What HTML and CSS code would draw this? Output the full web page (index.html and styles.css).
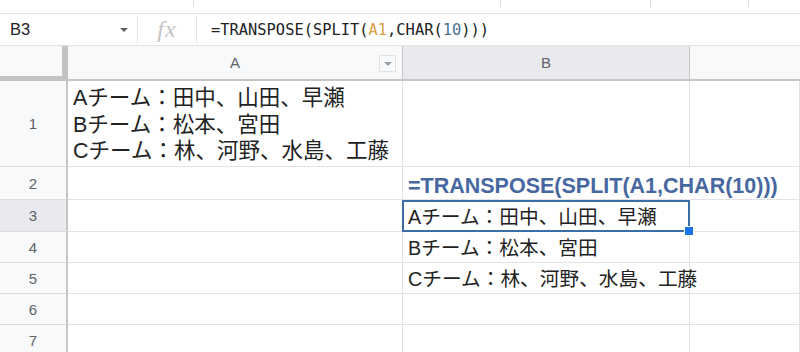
FILE: index.html
```html
<!DOCTYPE html>
<html lang="ja">

<head>
    <meta charset="UTF-8">
    <meta name="viewport" content="width=device-width, initial-scale=1.0">
    <title>TRANSPOSE SPLIT</title>
    <link rel="stylesheet" href="styles.css">
</head>

<body>

    <div class="toolbar-edge">
        <div class="tb tb-1"></div>
        <div class="tb tb-2"></div>
        <div class="tb tb-3"></div>
        <div class="tb tb-4"></div>
    </div>

    <div class="formula-bar">
        <div class="name-box">
            <span>B3</span>
            <span class="caret"></span>
        </div>
        <div class="fx">fx</div>
        <div class="formula">=TRANSPOSE(SPLIT(<span class="ref">A1</span>,CHAR(<span class="num">10</span>)))</div>
    </div>

    <div class="sheet">
        <!-- ヘッダー -->
        <div class="corner"></div>
        <div class="col-head">A<span class="filter-btn"><span class="caret small"></span></span></div>
        <div class="col-head active">B</div>
        <div class="col-head last"></div>

        <!-- 1行目 -->
        <div class="row-head">1</div>
        <div class="cell big">
            <div class="lines">
                <div>Aチーム：田中、山田、早瀬</div>
                <div>Bチーム：松本、宮田</div>
                <div>Cチーム：林、河野、水島、工藤</div>
            </div>
        </div>
        <div class="cell"></div>
        <div class="cell"></div>

        <!-- 2行目 -->
        <div class="row-head">2</div>
        <div class="cell"></div>
        <div class="cell formula-text">=TRANSPOSE(SPLIT(A1,CHAR(10)))</div>
        <div class="cell"></div>

        <!-- 3行目 -->
        <div class="row-head active">3</div>
        <div class="cell"></div>
        <div class="cell selected">Aチーム：田中、山田、早瀬</div>
        <div class="cell"></div>

        <!-- 4行目 -->
        <div class="row-head">4</div>
        <div class="cell"></div>
        <div class="cell">Bチーム：松本、宮田</div>
        <div class="cell"></div>

        <!-- 5行目 -->
        <div class="row-head">5</div>
        <div class="cell"></div>
        <div class="cell">Cチーム：林、河野、水島、工藤</div>
        <div class="cell"></div>

        <!-- 6行目 -->
        <div class="row-head">6</div>
        <div class="cell"></div>
        <div class="cell"></div>
        <div class="cell"></div>

        <!-- 7行目 -->
        <div class="row-head">7</div>
        <div class="cell"></div>
        <div class="cell"></div>
        <div class="cell"></div>
    </div>

</body>

</html>
```

FILE: styles.css
```css
body {
    margin: 0;
    padding: 0;
    width: 800px;
    height: 352px;
    overflow: hidden;
    background-color: #fff;
    color: #222;
    font-family: "Liberation Sans", "Noto Sans CJK JP", sans-serif;
}

.toolbar-edge {
    display: flex;
    border-bottom: 1px solid #e3e3e3;
    box-sizing: border-box;
    height: 14px;
}

.tb {
    height: 7px;
    border-right: 1px solid #dcdcdc;
    box-sizing: border-box;
}

.tb-1 {
    width: 194px;
}

.tb-2 {
    width: 307px;
}

.tb-3 {
    width: 150px;
}

.tb-4 {
    width: 98px;
}

.formula-bar {
    display: flex;
    align-items: stretch;
    height: 32px;
    border-bottom: 1px solid #e3e3e3;
    box-sizing: border-box;
}

.name-box {
    width: 138px;
    box-sizing: border-box;
    padding: 0 9px 0 10px;
    display: flex;
    align-items: center;
    justify-content: space-between;
    border-right: 1px solid #e3e3e3;
    font-size: 16.5px;
    color: #222;
    margin: 2px 0;
}

.caret {
    width: 0;
    height: 0;
    border-left: 4px solid transparent;
    border-right: 4px solid transparent;
    border-top: 4px solid #5f6368;
}

.caret.small {
    border-top: 4px solid #9aa0a6;
}

.fx {
    width: 59px;
    box-sizing: border-box;
    display: flex;
    align-items: center;
    justify-content: center;
    border-right: 1px solid #e3e3e3;
    margin: 2px 0;
    font-family: "Liberation Serif", serif;
    font-style: italic;
    font-size: 24px;
    color: #c4c4c4;
    letter-spacing: 1px;
}

.formula {
    display: flex;
    align-items: center;
    padding-left: 14px;
    font-family: "DejaVu Sans Mono", monospace;
    font-size: 15.4px;
    color: #222;
    white-space: pre;
}

.ref {
    color: #d9a046;
}

.num {
    color: #4a7391;
}

.sheet {
    display: grid;
    grid-template-columns: 68px 335px 287px 1fr;
    grid-template-rows: 35px 86px 33px 32px 31px 31px 31px 31px;
}

.sheet > div {
    box-sizing: border-box;
    min-width: 0;
}

.corner {
    background-color: #f8f9fa;
    border-right: 6px solid #c3c3c3;
    border-bottom: 5px solid #c3c3c3;
}

.col-head {
    position: relative;
    background-color: #f8f9fa;
    border-right: 1px solid #c6c6c6;
    border-bottom: 2px solid #c6c6c6;
    display: flex;
    align-items: center;
    justify-content: center;
    font-size: 15px;
    color: #5f6368;
}

.col-head.active,
.row-head.active {
    background-color: #e8eaed;
}

.col-head.last {
    border-right: none;
}

.filter-btn {
    position: absolute;
    right: 6px;
    top: 9px;
    width: 17px;
    height: 17px;
    box-sizing: border-box;
    border: 1px solid #e0e2e4;
    background-color: #f8f9fa;
    display: flex;
    align-items: center;
    justify-content: center;
}

.row-head {
    background-color: #f8f9fa;
    border-right: 2px solid #c6c6c6;
    border-bottom: 1px solid #dcdcdc;
    display: flex;
    align-items: center;
    justify-content: center;
    font-size: 15px;
    color: #5f6368;
}

.cell {
    border-right: 1px solid #e2e2e2;
    border-bottom: 1px solid #e2e2e2;
    display: flex;
    align-items: flex-end;
    padding: 0 0 2px 5px;
    font-size: 19.7px;
    line-height: 24px;
    white-space: nowrap;
}

.cell.big {
    font-size: 21.5px;
    padding-bottom: 1px;
}

.lines {
    line-height: 26.6px;
}

.formula-text {
    position: relative;
    z-index: 1;
    border-right-color: transparent;
    font-weight: bold;
    font-size: 21.5px;
    color: #4767a0;
    padding-bottom: 1px;
}

.selected {
    position: relative;
}

.selected::after {
    content: "";
    position: absolute;
    left: -1px;
    top: 0;
    right: -1px;
    bottom: -1px;
    border: 2px solid #3a6ea7;
}

.selected::before {
    content: "";
    position: absolute;
    right: -5px;
    bottom: -5px;
    width: 8px;
    height: 8px;
    background-color: #1a73e8;
    border: 1px solid #fff;
    z-index: 1;
}
```
